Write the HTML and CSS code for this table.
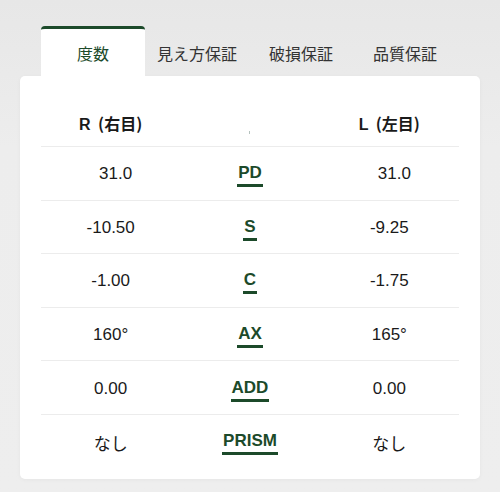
FILE: index.html
```html
<!DOCTYPE html>
<html lang="ja">
<head>
<meta charset="utf-8">
<link rel="stylesheet" href="styles.css">
</head>
<body>
<div class="page">
  <div class="tabs">
    <div class="tab active">度数</div>
    <div class="tab">見え方保証</div>
    <div class="tab">破損保証</div>
    <div class="tab">品質保証</div>
  </div>
  <div class="card">
    <div class="row head">
      <div class="cell eye">R <span class="jp">(右目)</span></div>
      <div class="cell mid"><span class="tick"></span></div>
      <div class="cell eye">L <span class="jp">(左目)</span></div>
    </div>
    <div class="row">
      <div class="cell val shift">31.0</div>
      <div class="cell mid"><span class="label">PD</span></div>
      <div class="cell val shift">31.0</div>
    </div>
    <div class="row">
      <div class="cell val">-10.50</div>
      <div class="cell mid"><span class="label">S</span></div>
      <div class="cell val">-9.25</div>
    </div>
    <div class="row">
      <div class="cell val">-1.00</div>
      <div class="cell mid"><span class="label">C</span></div>
      <div class="cell val">-1.75</div>
    </div>
    <div class="row">
      <div class="cell val">160°</div>
      <div class="cell mid"><span class="label">AX</span></div>
      <div class="cell val">165°</div>
    </div>
    <div class="row">
      <div class="cell val">0.00</div>
      <div class="cell mid"><span class="label">ADD</span></div>
      <div class="cell val">0.00</div>
    </div>
    <div class="row">
      <div class="cell val">なし</div>
      <div class="cell mid"><span class="label">PRISM</span></div>
      <div class="cell val">なし</div>
    </div>
  </div>
</div>
</body>
</html>
```
FILE: styles.css
```css
html, body {
  margin: 0;
  padding: 0;
}
body {
  background: linear-gradient(#e7e7e7, #ededed 30%, #eeeeee);
  min-height: 492px;
  font-family: "Liberation Sans", "Noto Sans CJK JP", sans-serif;
  color: #1a1a1a;
}
.page {
  padding: 26px 20px 13px;
}
.tabs {
  display: flex;
  padding-left: 21px;
}
.tab {
  width: 104px;
  height: 50px;
  box-sizing: border-box;
  display: flex;
  align-items: center;
  justify-content: center;
  padding-top: 4px;
  font-family: "Noto Sans CJK JP", sans-serif;
  font-size: 16px;
  color: #333;
}
.tab.active {
  background: #fff;
  border-top: 3px solid #1c4a2a;
  border-radius: 4px 4px 0 0;
  color: #1c4a2a;
  padding-top: 1px;
}
.card {
  background: #fff;
  border-radius: 5px;
  padding: 0 21px 11px;
  box-shadow: 0 1px 4px rgba(0,0,0,0.04);
}
.row {
  display: grid;
  grid-template-columns: 1fr 1fr 1fr;
  align-items: center;
  height: 53.6px;
  box-sizing: border-box;
  border-top: 1px solid #ececec;
}
.row.head {
  border-top: none;
  height: 70px;
  padding-top: 24px;
}
.cell {
  text-align: center;
}
.eye {
  font-weight: bold;
  font-size: 16px;
  word-spacing: 3px;
}
.jp {
  font-family: "Noto Sans CJK JP", sans-serif;
  font-weight: bold;
  word-spacing: 0;
}
.val {
  font-size: 17px;
  padding-top: 2px;
}
.val.shift {
  padding-left: 10px;
}
.mid {
  display: flex;
  justify-content: center;
}
.tick {
  display: block;
  width: 1px;
  height: 3px;
  background: #b5c2be;
  margin-top: 18px;
}
.label {
  display: inline-block;
  font-weight: bold;
  font-size: 17px;
  color: #1c4a2a;
  padding: 0 1px 1px;
  border-bottom: 3px solid #1c4a2a;
  line-height: 20px;
  margin-top: 4px;
}
```
